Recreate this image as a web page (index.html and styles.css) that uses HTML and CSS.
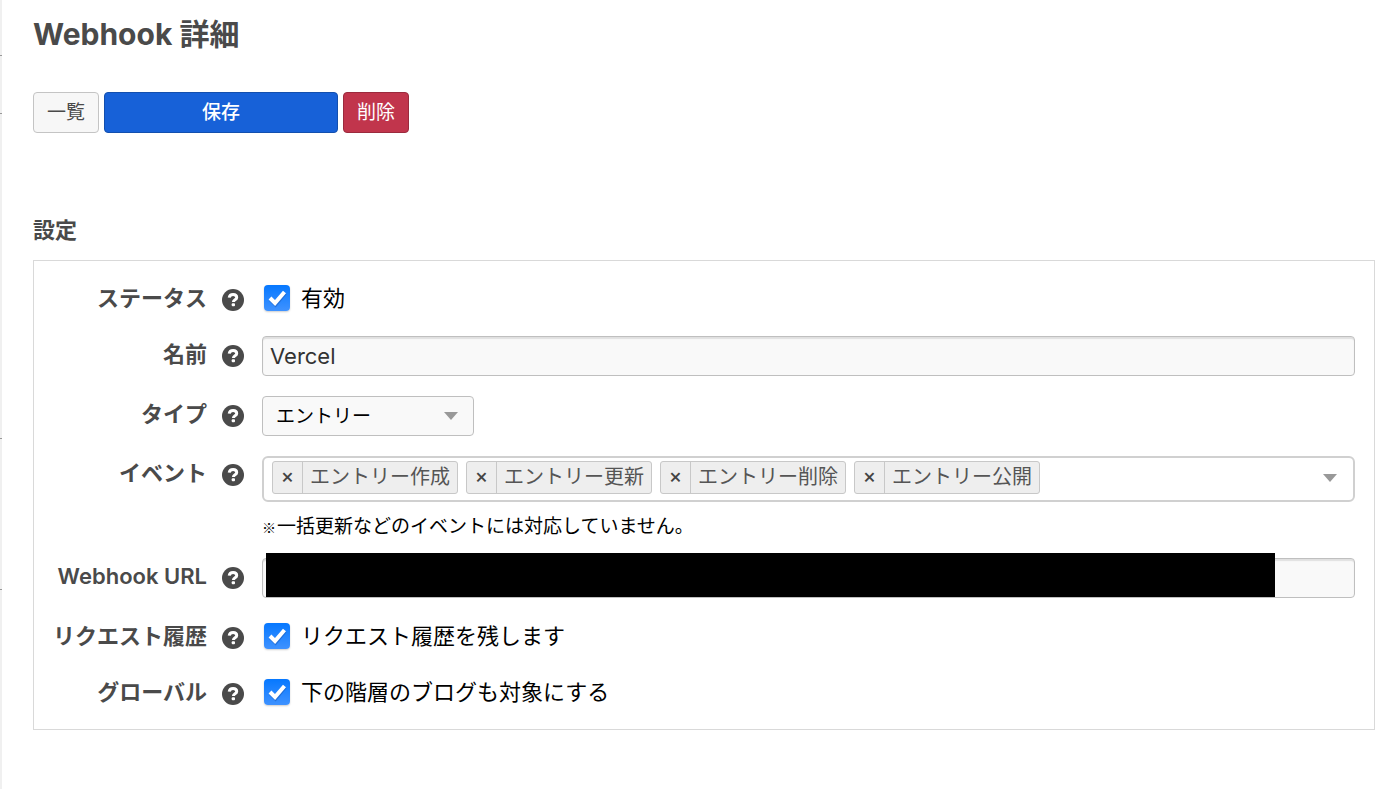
FILE: index.html
```
<!DOCTYPE html>
<html lang="ja">
<head>
    <meta charset="UTF-8">
    <title>Webhook 詳細</title>
    <link rel="stylesheet" href="styles.css">
</head>
<body>

<svg width="0" height="0" class="sprite">
    <symbol id="help" viewBox="0 0 22 22">
        <circle cx="11" cy="11" r="11" fill="#4a4a4a"/>
        <path d="M7.2 8.6C7.500 6.600 9 5.400 11.100 5.400c2.100 0 3.600 1.200 3.600 3 0 2.400-3.300 2.300-3.300 4.600" fill="none" stroke="#fff" stroke-width="3"/>
        <rect x="9.700" y="14.200" width="3.300" height="3.100" rx="1" fill="#fff"/>
    </symbol>
</svg>

<main class="page">
    <h1 class="title">Webhook 詳細</h1>

    <div class="actions">
        <button type="button" class="btn">一覧</button>
        <button type="submit" form="webhook" class="btn btn-save">保存</button>
        <button type="button" class="btn btn-delete">削除</button>
    </div>

    <h2 class="subtitle">設定</h2>

    <form id="webhook" class="panel">
        <div class="row">
            <div class="head">
                <label for="status">ステータス</label>
                <svg class="help"><use href="#help"/></svg>
            </div>
            <label class="check"><input id="status" type="checkbox" checked>有効</label>
        </div>

        <div class="row">
            <div class="head">
                <label for="name">名前</label>
                <svg class="help"><use href="#help"/></svg>
            </div>
            <div class="body">
                <input id="name" class="field" type="text" value="Vercel">
            </div>
        </div>

        <div class="row">
            <div class="head">
                <label for="type">タイプ</label>
                <svg class="help"><use href="#help"/></svg>
            </div>
            <div class="body">
                <select id="type" class="select">
                    <option>エントリー</option>
                </select>
            </div>
        </div>

        <div class="row">
            <div class="head head-event">
                <span id="event-label">イベント</span>
                <svg class="help"><use href="#help"/></svg>
            </div>
            <div class="body">
                <div class="multi">
                    <ul class="tags" aria-labelledby="event-label">
                        <li class="tag"><button type="button" class="tag-remove">×</button><span class="tag-text">エントリー作成</span></li>
                        <li class="tag"><button type="button" class="tag-remove">×</button><span class="tag-text">エントリー更新</span></li>
                        <li class="tag"><button type="button" class="tag-remove">×</button><span class="tag-text">エントリー削除</span></li>
                        <li class="tag"><button type="button" class="tag-remove">×</button><span class="tag-text">エントリー公開</span></li>
                    </ul>
                    <span class="arrow"></span>
                </div>
                <p class="note"><span class="mark">※</span>一括更新などのイベントには対応していません。</p>
            </div>
        </div>

        <div class="row">
            <div class="head">
                <label for="url">Webhook URL</label>
                <svg class="help"><use href="#help"/></svg>
            </div>
            <div class="body url">
                <input id="url" class="field" type="text">
                <span class="mask"></span>
            </div>
        </div>

        <div class="row">
            <div class="head">
                <label for="history">リクエスト履歴</label>
                <svg class="help"><use href="#help"/></svg>
            </div>
            <label class="check"><input id="history" type="checkbox" checked>リクエスト履歴を残します</label>
        </div>

        <div class="row">
            <div class="head">
                <label for="global">グローバル</label>
                <svg class="help"><use href="#help"/></svg>
            </div>
            <label class="check"><input id="global" type="checkbox" checked>下の階層のブログも対象にする</label>
        </div>
    </form>
</main>

</body>
</html>
```
FILE: styles.css
```
* {
    box-sizing: border-box;
}

body {
    margin: 0;
    min-height: 100vh;
    font-family: Inter, "Noto Sans CJK JP", sans-serif;
    font-size: 22px;
    color: #000;
    /* edge of the side menu */
    background:
        linear-gradient(#999, #999) 0 55px / 2px 1px no-repeat,
        linear-gradient(#999, #999) 0 113px / 2px 1px no-repeat,
        linear-gradient(#999, #999) 0 438px / 2px 1px no-repeat,
        linear-gradient(#999, #999) 0 589px / 2px 1px no-repeat,
        linear-gradient(#f0f0f0, #f0f0f0) 0 0 / 2px 100% no-repeat,
        #fff;
}

button, input, select {
    font-family: inherit;
}

.sprite {
    position: absolute;
}

.page {
    padding: 12px 25px 24px 33px;
}

.title {
    margin: 0 0 36px;
    font-size: 30px;
    line-height: 44px;
    font-weight: 700;
    color: #4a4a4a;
}

.actions {
    display: flex;
    gap: 5px;
    margin-bottom: 79px;
}

.btn {
    height: 41px;
    padding: 0 13px;
    border: 1px solid #c4c4c4;
    border-radius: 4px;
    background: #f7f7f7;
    color: #4a4a4a;
    font-size: 19px;
    line-height: 28px;
    cursor: pointer;
}

.btn-save {
    width: 234px;
    border-color: #134fae;
    background: #1761d8;
    color: #fff;
    font-weight: 500;
}

.btn-delete {
    border-color: #9b2a3d;
    background: #c1354c;
    color: #fff;
}

.subtitle {
    margin: 0 0 12px;
    font-size: 22px;
    line-height: 36px;
    font-weight: 700;
    color: #4a4a4a;
}

.panel {
    display: flex;
    flex-direction: column;
    gap: 20px;
    padding: 19px;
    border: 1px solid #d9d9d9;
}

.row {
    display: flex;
    align-items: flex-start;
    gap: 18px;
}

.head {
    display: flex;
    flex: none;
    align-items: center;
    justify-content: flex-end;
    gap: 15px;
    width: 191px;
    height: 36px;
    font-weight: 600;
    line-height: 36px;
    white-space: nowrap;
    color: #4a4a4a;
}

.help {
    flex: none;
    width: 22px;
    height: 22px;
    margin-top: 4px;
}

.body {
    flex: 1;
    min-width: 0;
}

.check {
    display: flex;
    align-items: center;
    gap: 11px;
    padding-left: 2px;
    height: 36px;
    line-height: 36px;
}

.check input {
    appearance: none;
    width: 26px;
    height: 26px;
    margin: 0;
    border-radius: 4px;
    box-shadow: 0 1px 2px rgba(0, 0, 0, .2);
    background:
        url("data:image/svg+xml,%3Csvg xmlns='http://www.w3.org/2000/svg' viewBox='0 0 26 26'%3E%3Cpath d='M6.500 14.500l5 5 9.500-11.500' fill='none' stroke='%231c5fc0' stroke-opacity='.6' stroke-width='4'/%3E%3Cpath d='M6 13l5 5 9.500-11' fill='none' stroke='%23fff' stroke-width='4'/%3E%3C/svg%3E"),
        linear-gradient(#0678ff, #3f92ff);
}

.field {
    display: block;
    width: 100%;
    height: 40px;
    padding: 0 7px;
    border: 1px solid #bfbfbf;
    border-radius: 4px;
    background: #f9f9f9;
    box-shadow: inset 0 2px 1px #e0e0e0;
    font-size: 22px;
    color: #333;
}

.select {
    appearance: none;
    display: block;
    width: 212px;
    height: 40px;
    padding: 0 13px;
    border: 1px solid #bfbfbf;
    border-radius: 4px;
    background: #f9f9f9 url("data:image/svg+xml,%3Csvg xmlns='http://www.w3.org/2000/svg' width='14' height='8'%3E%3Cpath d='M0 0h14l-7 8z' fill='%23999'/%3E%3C/svg%3E") right 15px center no-repeat;
    font-size: 19px;
    color: #000;
}

/* multiple select */
.multi {
    display: flex;
    align-items: center;
    justify-content: space-between;
    min-height: 46px;
    padding: 3px 16px 6px 8px;
    border: 2px solid #d0d0d0;
    border-radius: 6px;
}

.head-event {
    height: 34px;
}

.tags {
    display: flex;
    flex-wrap: wrap;
    gap: 8px;
    margin: 0;
    padding: 0;
    list-style: none;
}

.tag {
    display: flex;
    height: 33px;
    border: 1px solid #c8c8c8;
    border-radius: 3px;
    background: #eee;
    color: #555;
    font-size: 20px;
    line-height: 30px;
}

.tag-remove {
    width: 30px;
    padding: 0 0 4px;
    border: 0;
    border-right: 1px solid #c8c8c8;
    background: none;
    color: #444;
    font-size: 20px;
    font-weight: 500;
    cursor: pointer;
}

.tag-text {
    padding: 0 7px;
}

.arrow {
    border: 7px solid transparent;
    border-top: 8px solid #999;
    border-bottom: 0;
}

.note {
    display: flex;
    align-items: center;
    gap: 1px;
    margin: 14px 0 0;
    font-size: 19px;
    line-height: 22px;
}

.mark {
    font-family: "Noto Sans CJK JP", sans-serif;
    font-size: 14px;
    font-weight: 700;
}

.url {
    position: relative;
}

.mask {
    position: absolute;
    top: -5px;
    right: 80px;
    left: 4px;
    height: 44px;
    background: #000;
}
```
